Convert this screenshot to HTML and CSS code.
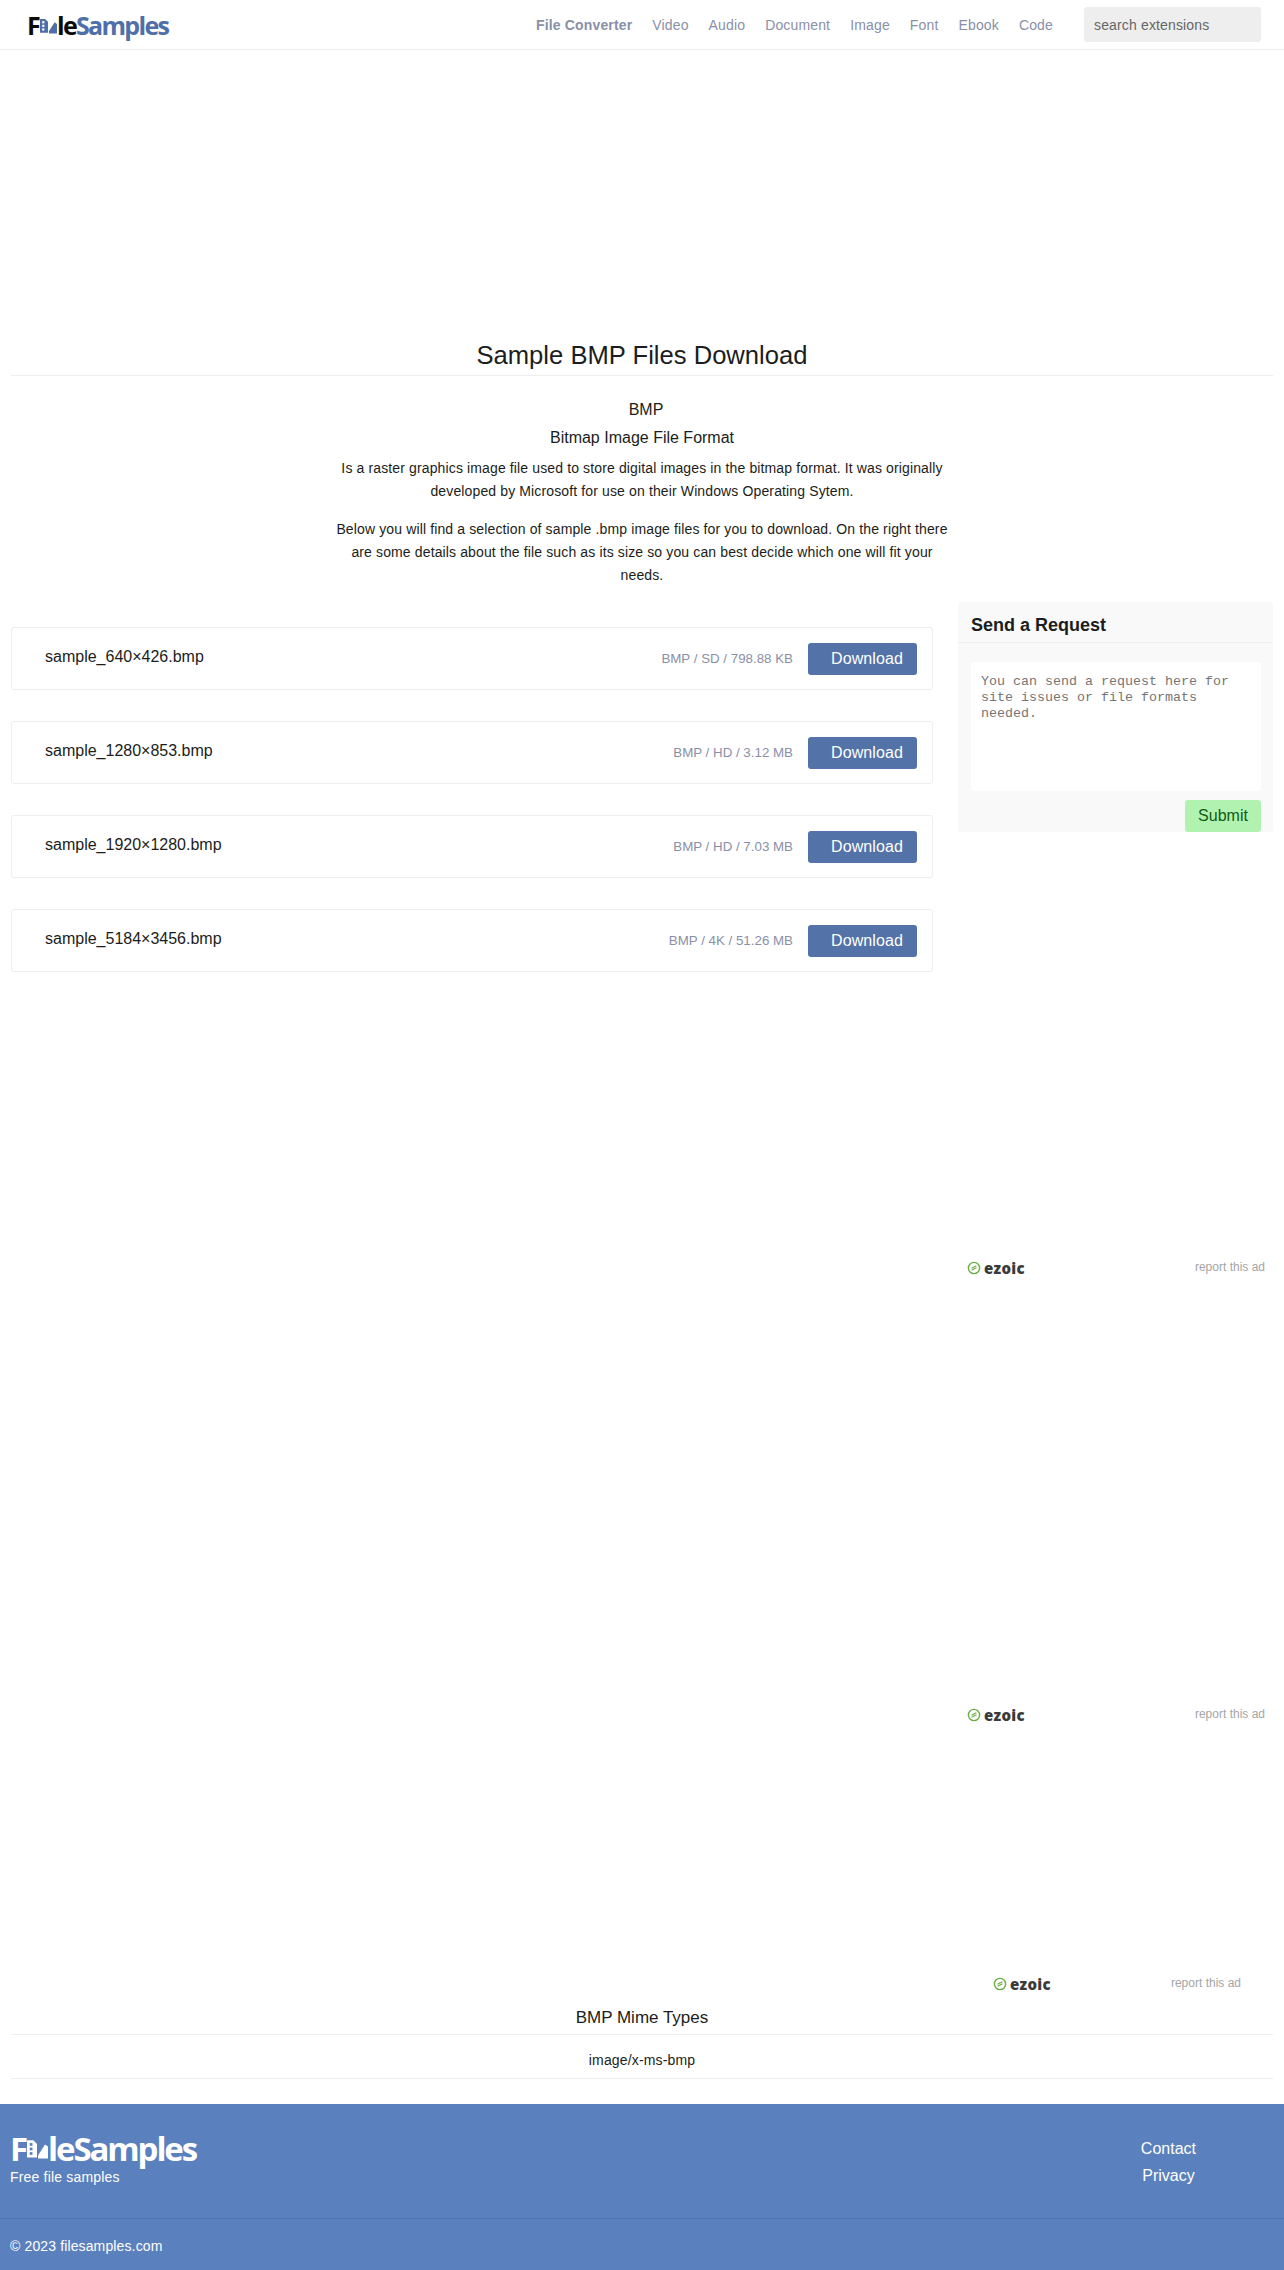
FILE: index.html
```html
<!DOCTYPE html>
<html lang="en">
<head>
    <meta charset="UTF-8">
    <meta name="viewport" content="width=device-width, initial-scale=1.0">
    <title>Sample BMP Files Download</title>
    <link rel="stylesheet" href="styles.css">
</head>
<body>
    <header class="navbar">
        <a class="logo" href="#">
            <span class="logo-dark">F<svg class="logo-i" viewBox="0 0 11 20"><path d="M0 1h7l4 4v15H0z" fill="#4f6fa8"/><rect x="3" y="4" width="3" height="3" fill="#fff"/><rect x="3" y="9" width="3" height="3" fill="#fff"/><rect x="3" y="14" width="3" height="3" fill="#fff"/></svg><svg class="logo-tri" viewBox="0 0 10 20"><path d="M0 20v-3L7 6l3 2v12z" fill="#4f6fa8"/></svg>le</span>Samples
        </a>
        <nav class="nav-links">
            <a class="nav-strong" href="#">File Converter</a>
            <a href="#">Video</a>
            <a href="#">Audio</a>
            <a href="#">Document</a>
            <a href="#">Image</a>
            <a href="#">Font</a>
            <a href="#">Ebook</a>
            <a href="#">Code</a>
        </nav>
        <input class="search" type="text" placeholder="search extensions">
    </header>

    <div class="top-ad"></div>

    <main class="content">
        <h1 class="page-title">Sample BMP Files Download</h1>

        <section class="intro">
            <h2>BMP</h2>
            <h3>Bitmap Image File Format</h3>
            <p>Is a raster graphics image file used to store digital images in the bitmap format. It was originally developed by Microsoft for use on their Windows Operating Sytem.</p>
            <p>Below you will find a selection of sample .bmp image files for you to download. On the right there are some details about the file such as its size so you can best decide which one will fit your needs.</p>
        </section>

        <div class="columns">
            <div class="file-list">
                <div class="file-row">
                    <span class="file-name">sample_640×426.bmp</span>
                    <span class="file-meta">BMP / SD / 798.88 KB</span>
                    <a class="btn-download" href="#">Download</a>
                </div>
                <div class="file-row">
                    <span class="file-name">sample_1280×853.bmp</span>
                    <span class="file-meta">BMP / HD / 3.12 MB</span>
                    <a class="btn-download" href="#">Download</a>
                </div>
                <div class="file-row">
                    <span class="file-name">sample_1920×1280.bmp</span>
                    <span class="file-meta">BMP / HD / 7.03 MB</span>
                    <a class="btn-download" href="#">Download</a>
                </div>
                <div class="file-row">
                    <span class="file-name">sample_5184×3456.bmp</span>
                    <span class="file-meta">BMP / 4K / 51.26 MB</span>
                    <a class="btn-download" href="#">Download</a>
                </div>
            </div>

            <aside class="sidebar">
                <form class="request-box">
                    <div class="request-title">Send a Request</div>
                    <div class="request-body">
                        <textarea class="request-text" placeholder="You can send a request here for site issues or file formats needed."></textarea>
                        <button class="btn-submit" type="button">Submit</button>
                    </div>
                </form>
                <div class="ad-slot ad-first">
                    <span class="ezoic"><svg viewBox="0 0 14 14"><circle cx="7" cy="7" r="5.6" fill="none" stroke="#6aad45" stroke-width="1.4"/><path d="M4.5 7.2 9.4 4.8M4.6 9.2 9.5 6.8" fill="none" stroke="#6aad45" stroke-width="1.2"/></svg>ezoic</span>
                    <span class="report">report this ad</span>
                </div>
                <div class="ad-slot ad-second">
                    <span class="ezoic"><svg viewBox="0 0 14 14"><circle cx="7" cy="7" r="5.6" fill="none" stroke="#6aad45" stroke-width="1.4"/><path d="M4.5 7.2 9.4 4.8M4.6 9.2 9.5 6.8" fill="none" stroke="#6aad45" stroke-width="1.2"/></svg>ezoic</span>
                    <span class="report">report this ad</span>
                </div>
            </aside>
        </div>

        <div class="bottom-ad">
            <span class="ezoic"><svg viewBox="0 0 14 14"><circle cx="7" cy="7" r="5.6" fill="none" stroke="#6aad45" stroke-width="1.4"/><path d="M4.5 7.2 9.4 4.8M4.6 9.2 9.5 6.8" fill="none" stroke="#6aad45" stroke-width="1.2"/></svg>ezoic</span>
            <span class="report">report this ad</span>
        </div>

        <section class="mime">
            <h4>BMP Mime Types</h4>
            <div class="mime-value">image/x-ms-bmp</div>
        </section>
    </main>

    <footer class="footer">
        <div class="footer-top">
            <div>
                <div class="footer-logo">F<svg class="logo-i" viewBox="0 0 11 20"><path d="M0 1h7l4 4v15H0z" fill="#fff"/><rect x="3" y="4" width="3" height="3" fill="#5b80be"/><rect x="3" y="9" width="3" height="3" fill="#5b80be"/><rect x="3" y="14" width="3" height="3" fill="#5b80be"/></svg><svg class="logo-tri" viewBox="0 0 10 20"><path d="M0 20v-3L7 6l3 2v12z" fill="#fff"/></svg>leSamples</div>
                <div class="footer-tag">Free file samples</div>
            </div>
            <div class="footer-links">
                <a href="#">Contact</a>
                <a href="#">Privacy</a>
            </div>
        </div>
        <div class="footer-bottom">© 2023 filesamples.com</div>
    </footer>
</body>
</html>
```
FILE: styles.css
```css
* {
    box-sizing: border-box;
}

body {
    margin: 0;
    font-family: "Liberation Sans", Arial, sans-serif;
    color: #1b1d20;
    background: #fff;
}

a {
    text-decoration: none;
}

.navbar {
    height: 50px;
    display: flex;
    align-items: center;
    padding: 0 23px 0 27px;
    border-bottom: 1px solid #eee;
}

.logo {
    font-family: "Open Sans", sans-serif;
    font-size: 25px;
    font-weight: 700;
    letter-spacing: -1.7px;
    color: #4f6fa8;
    white-space: nowrap;
}

.logo-dark {
    color: #0b0b0b;
}

.logo-i {
    width: 8px;
    height: 19px;
    margin: 0 1px;
}

.logo-tri {
    width: 8px;
    height: 19px;
}

.nav-links {
    margin-left: auto;
    display: flex;
    gap: 20px;
    font-size: 14px;
    letter-spacing: .15px;
}

.nav-links a {
    color: #8a8fa8;
}

.nav-links .nav-strong {
    font-weight: 700;
}

.search {
    width: 177px;
    height: 35px;
    margin-left: 31px;
    padding: 0 10px;
    border: 0;
    border-radius: 3px;
    background: #eee;
    font-family: inherit;
    font-size: 14px;
    letter-spacing: .15px;
}

.search::placeholder {
    color: #666;
    opacity: 1;
}

.top-ad {
    height: 285px;
}

.content {
    padding: 0 11px;
}

.page-title {
    margin: 0;
    height: 41px;
    font-size: 25.6px;
    font-weight: 400;
    line-height: 40px;
    text-align: center;
    border-bottom: 1px solid #eee;
}

.intro {
    width: 620px;
    margin: 0 auto;
    padding-top: 24px;
    text-align: center;
}

.intro h2,
.intro h3 {
    margin: 0;
    font-size: 16px;
    font-weight: 400;
    line-height: 20px;
}

.intro h2 {
    padding-left: 8px;
}

.intro h3 {
    margin-top: 8px;
}

.intro p {
    margin: 9px 0 15px;
    font-size: 14px;
    letter-spacing: .13px;
    line-height: 23px;
}

.columns {
    display: flex;
    justify-content: space-between;
    align-items: flex-start;
    margin-top: 1px;
}

.file-list {
    width: 922px;
    display: flex;
    flex-direction: column;
    gap: 31px;
    padding-top: 25px;
}

.file-row {
    height: 63px;
    display: flex;
    align-items: center;
    padding: 0 15px 0 33px;
    border: 1px solid #eee;
    border-radius: 3px;
}

.file-name {
    font-size: 16px;
    margin-top: -4px;
}

.file-meta {
    margin-left: auto;
    font-size: 13.33px;
    color: #8a8fa8;
}

.btn-download {
    width: 109px;
    height: 32px;
    margin-left: 15px;
    padding-left: 23px;
    border-radius: 3px;
    background: #5272a8;
    color: #fff;
    font-size: 16px;
    letter-spacing: .1px;
    line-height: 32px;
}

.sidebar {
    width: 315px;
}

.request-box {
    background: #f9f9f9;
    border-radius: 3px;
}

.request-title {
    height: 41px;
    padding-left: 13px;
    font-size: 18px;
    font-weight: 700;
    line-height: 47px;
    border-bottom: 1px solid #eee;
}

.request-body {
    display: flex;
    flex-direction: column;
    align-items: flex-end;
    padding: 19px 12px 0 13px;
}

.request-text {
    display: block;
    width: 100%;
    height: 129px;
    padding: 12px 10px;
    border: 0;
    border-radius: 3px;
    background: #fff;
    resize: none;
    font-family: "Liberation Mono", monospace;
    font-size: 13.33px;
    line-height: 16px;
}

.btn-submit {
    width: 76px;
    height: 32px;
    margin-top: 9px;
    border: 0;
    border-radius: 3px;
    background: #b2f2b0;
    color: #0f5c14;
    font-family: inherit;
    font-size: 16px;
}

.ad-slot,
.bottom-ad {
    display: flex;
    justify-content: space-between;
    align-items: center;
    height: 20px;
}

.ad-slot {
    padding: 0 8px 0 9px;
}

.ad-first {
    margin-top: 425px;
}

.ad-second {
    margin-top: 427px;
}

.bottom-ad {
    width: 248px;
    margin: 249px 32px 0 auto;
}

.ezoic {
    display: flex;
    align-items: center;
    gap: 3px;
    margin-top: 2px;
    font-family: "Open Sans", sans-serif;
    font-size: 15px;
    font-weight: 800;
    letter-spacing: .3px;
    color: #3a3a3a;
}

.ezoic svg {
    width: 14px;
    height: 14px;
}

.report {
    font-size: 12px;
    color: #a5a5a5;
}

.mime {
    margin-top: 6px;
    text-align: center;
}

.mime h4 {
    margin: 0;
    height: 36px;
    font-size: 17px;
    font-weight: 400;
    line-height: 38px;
    border-bottom: 1px solid #eee;
}

.mime-value {
    height: 44px;
    font-size: 14px;
    letter-spacing: .15px;
    line-height: 50px;
    border-bottom: 1px solid #eee;
}

.footer {
    margin-top: 25px;
    height: 166px;
    background: #5b80be;
    color: #fff;
}

.footer-top {
    height: 115px;
    display: flex;
    justify-content: space-between;
    padding: 25px 88px 0 10px;
    border-bottom: 1px solid #4f74b0;
}

.footer-logo {
    font-family: "Open Sans", sans-serif;
    font-size: 33px;
    font-weight: 700;
    letter-spacing: -2.1px;
    line-height: 40px;
}

.footer-logo .logo-i {
    width: 10px;
    height: 25px;
}

.footer-logo .logo-tri {
    width: 10px;
    height: 25px;
}

.footer-tag {
    font-size: 14px;
    letter-spacing: .18px;
}

.footer-links {
    display: flex;
    flex-direction: column;
    align-items: center;
    gap: 9px;
    padding-top: 11px;
    font-size: 16px;
}

.footer-links a {
    color: #fff;
}

.footer-bottom {
    padding: 19px 10px;
    font-size: 14px;
    letter-spacing: .13px;
}
```
